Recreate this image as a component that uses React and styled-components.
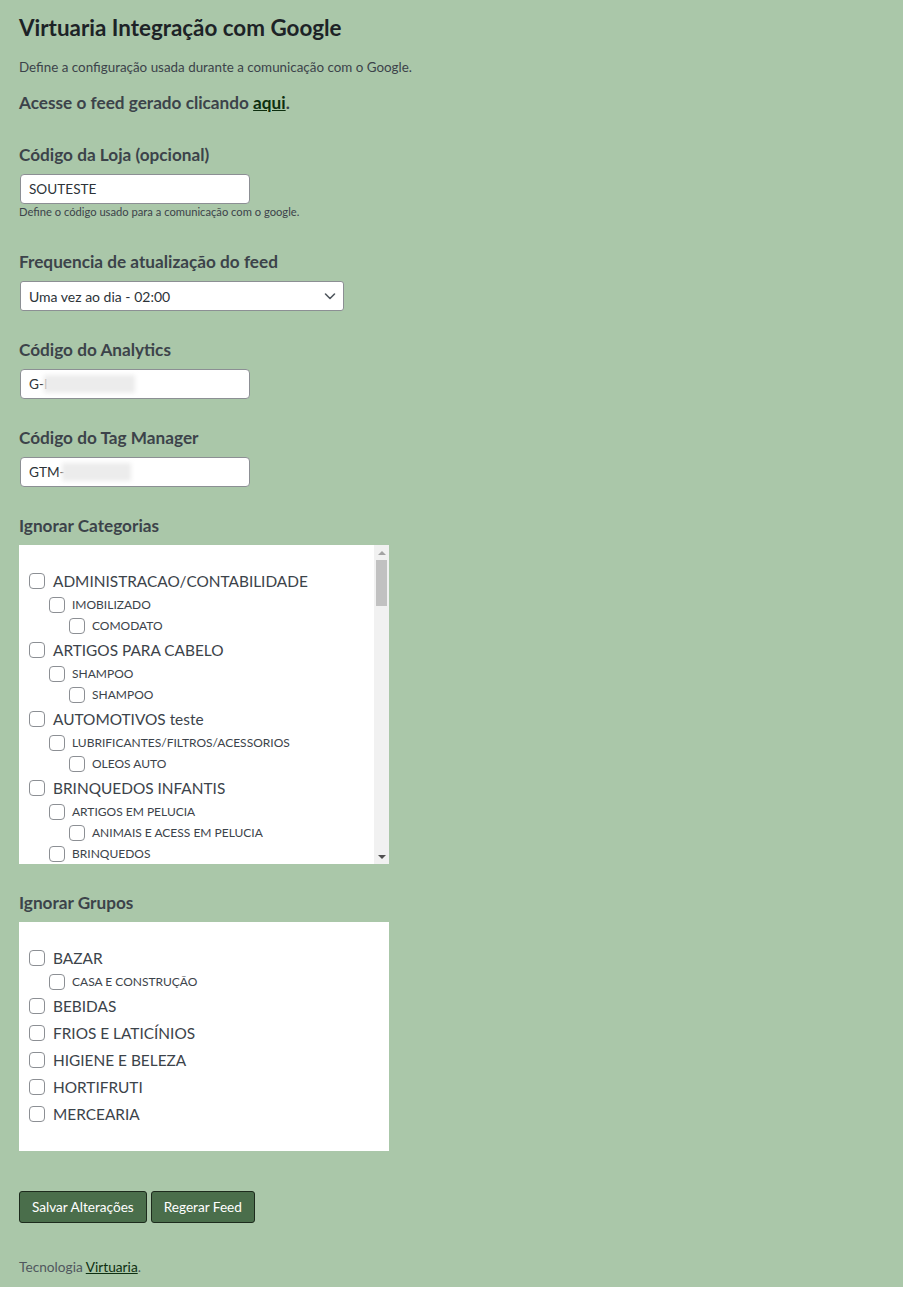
import React from "react";
import styled, { createGlobalStyle } from "styled-components";

const GlobalStyle = createGlobalStyle`
  * {
    box-sizing: border-box;
  }
  body {
    margin: 0;
    background: #ffffff;
    font-family: Lato, "Liberation Sans", sans-serif;
    color: #3c434a;
  }
`;

const categories = [
  {
    name: "ADMINISTRACAO/CONTABILIDADE",
    children: [{ name: "IMOBILIZADO", children: [{ name: "COMODATO" }] }],
  },
  {
    name: "ARTIGOS PARA CABELO",
    children: [{ name: "SHAMPOO", children: [{ name: "SHAMPOO" }] }],
  },
  {
    name: "AUTOMOTIVOS teste",
    children: [
      {
        name: "LUBRIFICANTES/FILTROS/ACESSORIOS",
        children: [{ name: "OLEOS AUTO" }],
      },
    ],
  },
  {
    name: "BRINQUEDOS INFANTIS",
    children: [
      {
        name: "ARTIGOS EM PELUCIA",
        children: [{ name: "ANIMAIS E ACESS EM PELUCIA" }],
      },
      { name: "BRINQUEDOS" },
    ],
  },
];

const groups = [
  { name: "BAZAR", children: [{ name: "CASA E CONSTRUÇÃO" }] },
  { name: "BEBIDAS" },
  { name: "FRIOS E LATICÍNIOS" },
  { name: "HIGIENE E BELEZA" },
  { name: "HORTIFRUTI" },
  { name: "MERCEARIA" },
];

const TermList = ({ items, level = 0 }) => (
  <List $level={level}>
    {items.map((item, i) => (
      <Item key={item.name + i}>
        <Row $level={level}>
          <Check type="checkbox" />
          <RowLabel $level={level}>{item.name}</RowLabel>
        </Row>
        {item.children && <TermList items={item.children} level={level + 1} />}
      </Item>
    ))}
  </List>
);

const ChevronDown = () => (
  <svg width="16" height="16" viewBox="0 0 16 16" fill="none">
    <path
      d="M3.5 6l4.5 4.5L12.5 6"
      stroke="#50575e"
      strokeWidth="1.6"
      strokeLinecap="round"
      strokeLinejoin="round"
    />
  </svg>
);

const App = () => {
  return (
    <Page>
      <GlobalStyle />
      <Title>Virtuaria Integração com Google</Title>
      <Intro>Define a configuração usada durante a comunicação com o Google.</Intro>
      <FeedLine>
        Acesse o feed gerado clicando <DarkLink href="#">aqui</DarkLink>.
      </FeedLine>

      <Field $first>
        <Label>Código da Loja (opcional)</Label>
        <TextInput defaultValue="SOUTESTE" />
        <Help>Define o código usado para a comunicação com o google.</Help>
      </Field>

      <Field>
        <Label>Frequencia de atualização do feed</Label>
        <SelectWrap>
          <Select defaultValue="daily">
            <option value="daily">Uma vez ao dia - 02:00</option>
          </Select>
          <SelectIcon>
            <ChevronDown />
          </SelectIcon>
        </SelectWrap>
      </Field>

      <Field>
        <Label>Código do Analytics</Label>
        <MaskedWrap>
          <TextInput defaultValue="G-I" />
          <Blur $left={25} $width={91} />
        </MaskedWrap>
      </Field>

      <Field>
        <Label>Código do Tag Manager</Label>
        <MaskedWrap>
          <TextInput defaultValue="GTM-" />
          <Blur $left={43} $width={69} />
        </MaskedWrap>
      </Field>

      <Field>
        <Label>Ignorar Categorias</Label>
        <TermBox $height={319}>
          <TermScroll>
            <TermList items={categories} />
          </TermScroll>
          <ScrollBar>
            <ScrollButton>
              <Arrow $up />
            </ScrollButton>
            <Thumb />
            <ScrollButton>
              <Arrow />
            </ScrollButton>
          </ScrollBar>
        </TermBox>
      </Field>

      <Field>
        <Label>Ignorar Grupos</Label>
        <TermBox $height={229}>
          <TermScroll>
            <TermList items={groups} />
          </TermScroll>
        </TermBox>
      </Field>

      <Actions>
        <Button>Salvar Alterações</Button>
        <Button>Regerar Feed</Button>
      </Actions>

      <Footer>
        Tecnologia <DarkLink href="#">Virtuaria</DarkLink>.
      </Footer>
    </Page>
  );
};

const Page = styled.div`
  background: #aac7a9;
  min-height: 1287px;
  padding: 15px 19px 11px;
  display: flex;
  flex-direction: column;
  align-items: flex-start;
`;

const Title = styled.h1`
  margin: 0;
  font-size: 22.4px;
  line-height: 26px;
  font-weight: 700;
  color: #1d2327;
`;

const Intro = styled.p`
  margin: 17px 0 0;
  font-size: 13.4px;
  line-height: 18px;
  color: #3c434a;
`;

const FeedLine = styled.p`
  margin: 16px 0 0;
  font-size: 17.2px;
  line-height: 22px;
  font-weight: 700;
  color: #3c434a;
`;

const DarkLink = styled.a`
  color: #0e2f10;
  text-decoration: underline;
`;

const Field = styled.div`
  display: flex;
  flex-direction: column;
  align-items: flex-start;
  margin-top: ${(p) => (p.$first ? "30px" : "28px")};
`;

const Label = styled.div`
  font-size: 17.2px;
  line-height: 22px;
  font-weight: 700;
  color: #3c434a;
  margin-bottom: 8px;
`;

const TextInput = styled.input`
  width: 230px;
  height: 30px;
  margin: 0 0 0 1px;
  padding: 0 8px;
  border: 1px solid #8c8f94;
  border-radius: 4px;
  background: #fff;
  font-family: Lato, "Liberation Sans", sans-serif;
  font-size: 13.6px;
  color: #2c3338;
  outline: none;
`;

const MaskedWrap = styled.div`
  position: relative;
`;

const Blur = styled.span`
  position: absolute;
  top: 6px;
  left: ${(p) => p.$left}px;
  width: ${(p) => p.$width}px;
  height: 18px;
  background: #ececec;
  filter: blur(2px);
  pointer-events: none;
`;

const Help = styled.p`
  margin: 1px 0 4px;
  font-size: 11.2px;
  line-height: 14px;
  color: #3c434a;
`;

const SelectWrap = styled.div`
  position: relative;
  margin-left: 1px;
`;

const Select = styled.select`
  appearance: none;
  width: 324px;
  height: 30px;
  padding: 0 24px 0 8px;
  border: 1px solid #8c8f94;
  border-radius: 3px;
  background: #fff;
  font-family: Lato, "Liberation Sans", sans-serif;
  font-size: 14px;
  color: #2c3338;
  outline: none;
`;

const SelectIcon = styled.span`
  position: absolute;
  right: 6px;
  top: 7px;
  display: flex;
  pointer-events: none;
`;

const TermBox = styled.div`
  display: flex;
  width: 370px;
  height: ${(p) => p.$height}px;
  background: #fff;
`;

const TermScroll = styled.div`
  flex: 1;
  min-width: 0;
  overflow: hidden;
  padding: 24px 10px 22px;
`;

const ScrollBar = styled.div`
  flex: none;
  width: 15px;
  display: flex;
  flex-direction: column;
  background: #f1f1f1;
`;

const ScrollButton = styled.div`
  flex: none;
  height: 15px;
  display: flex;
  align-items: center;
  justify-content: center;
  &:last-child {
    margin-top: auto;
  }
`;

const Arrow = styled.span`
  width: 0;
  height: 0;
  border-left: 4px solid transparent;
  border-right: 4px solid transparent;
  ${(p) =>
    p.$up
      ? "border-bottom: 4px solid #a3a3a3; margin-top: 1px;"
      : "border-top: 4px solid #505050;"}
`;

const Thumb = styled.div`
  flex: none;
  height: 46px;
  margin: 0 2px;
  background: #c1c1c1;
`;

const List = styled.ul`
  list-style: none;
  margin: 0;
  padding: 0 0 0 ${(p) => (p.$level === 0 ? 0 : 20)}px;
  margin-top: ${(p) => (p.$level === 0 ? 0 : 4)}px;
  display: flex;
  flex-direction: column;
  gap: 4px;
`;

const Item = styled.li`
  margin: 0;
`;

const Row = styled.label`
  display: flex;
  align-items: center;
  height: ${(p) => (p.$level === 0 ? 23 : 17)}px;
  gap: ${(p) => (p.$level === 0 ? 8 : 7)}px;
`;

const Check = styled.input`
  appearance: none;
  flex: none;
  width: 16px;
  height: 16px;
  margin: 0;
  border: 1px solid #8c8f94;
  border-radius: 4px;
  background: #fff;
`;

const RowLabel = styled.span`
  font-size: ${(p) => (p.$level === 0 ? 15.4 : 12)}px;
  color: #3c434a;
  white-space: nowrap;
`;

const Actions = styled.div`
  display: flex;
  gap: 4px;
  margin-top: 40px;
`;

const Button = styled.button`
  height: 32px;
  padding: 0 12px;
  border: 1px solid #1d2b1d;
  border-radius: 3px;
  background: #4a6e4b;
  color: #fff;
  font-family: Lato, "Liberation Sans", sans-serif;
  font-size: 13.6px;
  cursor: pointer;
`;

const Footer = styled.p`
  margin: 35px 0 0;
  font-size: 13.7px;
  line-height: 18px;
  color: #50575e;
`;

export default App;
